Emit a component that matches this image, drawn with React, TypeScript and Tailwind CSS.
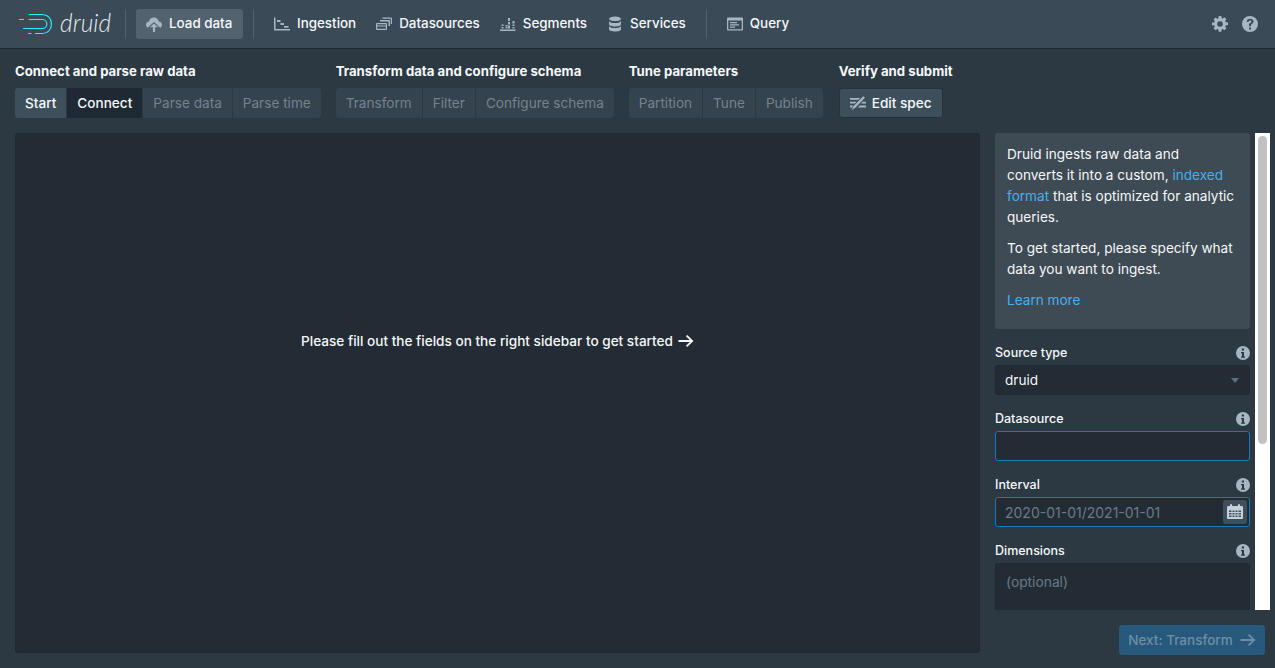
import type { ReactNode } from 'react'

// blueprint style icons, drawn by hand on a 16 grid
const Icon = ({ children, size = 16, className = '' }: { children: ReactNode; size?: number; className?: string }) => (
    <svg width={size} height={size} viewBox="0 0 16 16" fill="currentColor" className={'shrink-0 ' + className}>
        {children}
    </svg>
)

const CloudUpload = () => (
    <Icon>
        <path d="M8 1.500c2.500 0 4.500 1.700 4.800 4 1.700.2 3.200 1.500 3.200 3.300 0 1.300-.7 2.400-1.800 3L8 6 1.800 11.800C.7 11.200 0 10.100 0 8.800c0-1.800 1.300-3.100 3-3.300C3.500 3.100 5.500 1.500 8 1.500z" />
        <path d="M8 7.500l4 3.800H9.100V16H6.900v-4.700H4z" />
    </Icon>
)

const Gantt = () => (
    <Icon>
        <path d="M0 1.500h1.500v11.500H16v1.500H0z" />
        <path d="M3 4h3.500v2H3zM6.500 7H10v2H6.500zM10 10h4.500v1.800H10z" />
    </Icon>
)

const MultiSelect = () => (
    <Icon>
        <path fillRule="evenodd" d="M1 7h9a1 1 0 011 1v5a1 1 0 01-1 1H1a1 1 0 01-1-1V8a1 1 0 011-1zm.2 1.200v1.300h8.600V8.200zm0 2.300v2.300h8.600v-2.300z" />
        <path d="M4 4h9a1 1 0 011 1v5h-1.500V5.500H4z" />
        <path d="M6.500 1.500H15a1 1 0 011 1V8h-1.200V2.700H6.500z" />
    </Icon>
)

const Stacked = () => (
    <Icon>
        <path d="M0 13.500h16V15H0zM2 8.500h2V10H2zM2 11h2v1.500H2zM6 9h2v1.500H6zM6 11h2v1.500H6zM8.500 2h2v3h-2zM8.500 6h2v2.500h-2zM8.500 9.500h2v3h-2zM13 5h2v2.500h-2zM13 8.500h2V10h-2zM13 11h2v1.500h-2z" transform="translate(-0.500 0)" />
    </Icon>
)

const Database = () => (
    <Icon>
        <ellipse cx="8" cy="2.800" rx="6" ry="2.300" />
        <path d="M2 5.200c1 1.300 3.400 1.900 6 1.900s5-.6 6-1.900v3c0 1.300-2.700 2.300-6 2.300s-6-1-6-2.300z" />
        <path d="M2 10.200c1 1.300 3.400 1.900 6 1.900s5-.6 6-1.900v3c0 1.300-2.700 2.300-6 2.300s-6-1-6-2.300z" />
    </Icon>
)

const Application = () => (
    <Icon>
        <path fillRule="evenodd" d="M1 1.500h14a1 1 0 011 1v11a1 1 0 01-1 1H1a1 1 0 01-1-1v-11a1 1 0 011-1zM1.300 4.500v8.700h13.400V4.500z" />
        <path d="M3 6h7v1.200H3zM3 8.300h9v1.200H3zM3 10.600h5v1.200H3z" />
    </Icon>
)

const ManualData = () => (
    <Icon>
        <path d="M0 3h10L8.500 4.800H0zM0 6.800h6.500L5 8.600H0zM0 10.600h3l-1 1.800H0zM9.500 10.600H16v1.800H8zM12.500 6.800H16v1.800h-5z" />
        <path d="M13.200 1.200l1.800 1.600L5 13l-3.500 2 1.700-3.500z" />
    </Icon>
)

const Cog = () => (
    <Icon>
        <path fillRule="evenodd" d="M6.700 0h2.600l.4 2.100 1 .4L12.500 1.300l1.900 1.900-1.200 1.800.4 1 2.400.400v2.700l-2.400.4-.4 1 1.200 1.800-1.900 1.900-1.800-1.200-1 .4-.4 2.400H6.700l-.4-2.400-1-.4-1.800 1.200-1.900-1.900 1.200-1.800-.4-1L0 9.300V6.700l2.400-.4.4-1-1.200-1.800 1.900-1.900 1.800 1.200 1-.4zM8 5.200a2.800 2.800 0 100 5.600 2.800 2.800 0 000-5.600z" />
    </Icon>
)

const Help = () => (
    <Icon>
        <path fillRule="evenodd" d="M8 0a8 8 0 110 16A8 8 0 018 0zM7 11.500V13.500h2v-2zM8 2.800c-1.900 0-3.200 1-3.400 2.900l1.900.3c.1-.9.600-1.400 1.500-1.400.8 0 1.300.4 1.300 1.100 0 .6-.4 1-1 1.400C7.500 7.200 7 7.900 7 9v1.200h2V9.300c0-.5.200-.8.800-1.200.9-.6 1.700-1.300 1.700-2.600 0-1.700-1.400-2.700-3.500-2.700z" />
    </Icon>
)

const Info = () => (
    <svg width={14} height={14} viewBox="0 0 14 14" fill="currentColor" className="shrink-0 text-[#a7b6c2]">
        <path fillRule="evenodd" d="M7 0a7 7 0 110 14A7 7 0 017 0zM5.800 2.500v2h2.200v-2zM5 6v1.200h1v3.300H5v1.200h4v-1.200H8V6z" />
    </svg>
)

const Calendar = () => (
    <Icon>
        <path fillRule="evenodd" d="M1 2h2V1a1 1 0 012 0v1h6V1a1 1 0 012 0v1h2a1 1 0 011 1v11a1 1 0 01-1 1H1a1 1 0 01-1-1V3a1 1 0 011-1zm1 4.500V8h2.500V6.500zm3.500 0V8h2V6.500zm3 0V8h2V6.500zm3 0V8H14V6.500zM2 9v1.500h2.500V9zm3.500 0v1.500h2V9zm3 0v1.500h2V9zm3 0v1.500H14V9zM2 11.500V13h2.500v-1.500zm3.500 0V13h2v-1.500zm3 0V13h2v-1.500zm3 0V13H14v-1.500z" />
    </Icon>
)

const ArrowRight = ({ className = '' }: { className?: string }) => (
    <Icon className={className}>
        <path d="M9.200 2L15.500 8l-6.300 6-1.300-1.300L11.800 9H.5V7h11.300L7.900 3.300z" />
    </Icon>
)

const Logo = () => (
    <svg width={36} height={26} viewBox="0 0 36 26" fill="none" stroke="#2ceefb" strokeWidth={1.200} strokeLinecap="round" className="shrink-0">
        <path d="M11 3.500h13.500c5 0 9 4 9 9.500s-4 9.500-9 9.500h-7" />
        <path d="M11 8.500h13.500c2.500 0 4.300 2 4.300 4.500s-1.800 4.500-4.300 4.500H5.500" />
        <path d="M1.500 8.500h4M10.500 22.500h2.500" />
    </svg>
)

const Divider = () => <div className="w-px h-[30px] bg-[#50606d] mx-[10px]" />

const NavLink = ({ icon, label, className = '' }: { icon: ReactNode; label: string; className?: string }) => (
    <div className={'flex items-center gap-[7px] h-[30px] px-[10px] rounded-[3px] ' + className}>
        <span className="text-[#a7b6c2]">{icon}</span>
        <span className="text-[13.400px] font-medium text-[#f5f8fa] pb-[2px]">{label}</span>
    </div>
)

const StepGroup = ({ title, steps, className = '' }: { title: string; steps: { label: string; state?: string }[]; className?: string }) => (
    <div className={className}>
        <div className="text-[13.200px] font-bold leading-[15px] text-[#f5f8fa] mb-[9px]">{title}</div>
        <div className="flex">
            {steps.map((step, index) => (
                <div
                    key={index}
                    className={
                        'h-[30px] px-[10px] flex items-center text-[13.600px] border-r border-[#2c3842] last:border-r-0 first:rounded-l-[3px] last:rounded-r-[3px] '
                        + (step.state === 'active'
                            ? 'bg-[#1f2933] text-[#f5f8fa] font-medium'
                            : step.state === 'done'
                                ? 'bg-[#3e4f5c] text-[#f5f8fa] font-medium'
                                : 'bg-[#35434f] text-[#74828e]')
                    }
                >
                    {step.label}
                </div>
            ))}
        </div>
    </div>
)

const Field = ({ label, children }: { label: string; children: ReactNode }) => (
    <div className="mb-[15px]">
        <div className="flex items-center justify-between h-[18px] mb-[3px]">
            <span className="text-[12.500px] font-medium text-[#f5f8fa]">{label}</span>
            <Info />
        </div>
        {children}
    </div>
)

export default function App() {
    return (
        <div className="w-[1275px] h-[668px] overflow-hidden flex flex-col bg-[#2c3842] text-[#f5f8fa] font-['Inter','Liberation_Sans',sans-serif]">
            <nav className="h-[49px] shrink-0 flex items-center bg-[#3a4a57] border-b border-[#1f2933] pl-[18px] pr-[17px]">
                <Logo />
                <span className="ml-[6px] w-[55px] text-[24.500px] font-light italic leading-none text-[#e4e8ec] pb-[2px] font-['Lato','Noto_Sans',sans-serif]">druid</span>
                <Divider />
                <NavLink icon={<CloudUpload />} label="Load data" className="bg-[#52626f] w-[107px]" />
                <Divider />
                <NavLink icon={<Gantt />} label="Ingestion" />
                <NavLink icon={<MultiSelect />} label="Datasources" />
                <NavLink icon={<Stacked />} label="Segments" />
                <NavLink icon={<Database />} label="Services" />
                <Divider />
                <NavLink icon={<Application />} label="Query" />
                <div className="ml-auto flex items-center gap-[14px] text-[#a7b6c2]">
                    <Cog />
                    <Help />
                </div>
            </nav>

            <main className="flex-1 min-h-0 flex flex-col pl-[15px] pr-[5px] pt-[15px]">
                <div className="flex gap-[15px] h-[69px] shrink-0">
                    <StepGroup
                        title="Connect and parse raw data"
                        steps={[{ label: 'Start', state: 'done' }, { label: 'Connect', state: 'active' }, { label: 'Parse data' }, { label: 'Parse time' }]}
                    />
                    <StepGroup
                        title="Transform data and configure schema"
                        steps={[{ label: 'Transform' }, { label: 'Filter' }, { label: 'Configure schema' }]}
                    />
                    <StepGroup title="Tune parameters" steps={[{ label: 'Partition' }, { label: 'Tune' }, { label: 'Publish' }]} />
                    <div className="ml-[1px]">
                        <div className="text-[13.200px] font-bold leading-[15px] text-[#f5f8fa] mb-[9px]">Verify and submit</div>
                        <div className="h-[30px] w-[104px] pl-[10px] flex items-center gap-[6px] rounded-[3px] bg-[#3e4f5c] border border-[#27323b] text-[13.600px] font-medium">
                            <span className="text-[#a7b6c2]"><ManualData /></span>
                            Edit spec
                        </div>
                    </div>
                </div>

                <div className="flex-1 min-h-0 flex gap-[15px]">
                    <div className="w-[965px] h-[520px] shrink-0 rounded-[3px] bg-[#232c35] border border-[#1f2933] flex items-center justify-center gap-[5px] pb-[104px] text-[13.600px] font-medium">
                        Please fill out the fields on the right sidebar to get started
                        <ArrowRight />
                    </div>

                    <div className="w-[275px] flex flex-col">
                        <div className="h-[477px] flex overflow-hidden">
                            <div className="w-[255px] shrink-0">
                                <div className="h-[196px] rounded-[3px] bg-[#3e4a54] pt-[11px] px-[12px] text-[13.600px] leading-[21px] mb-[15px]">
                                    <p className="mb-[10px]">
                                        Druid ingests raw data and converts it into a custom, <span className="text-[#48aff0]">indexed</span> <span className="text-[#48aff0]">format</span> that is optimized for analytic queries.
                                    </p>
                                    <p className="mb-[10px]">To get started, please specify what data you want to ingest.</p>
                                    <p className="text-[#48aff0]">Learn more</p>
                                </div>
                                <Field label="Source type">
                                    <div className="h-[30px] pl-[9px] pr-[10px] flex items-center justify-between rounded-[3px] bg-[#232c35] border border-[#1f2933] text-[13.600px]">
                                        druid
                                        <span className="w-0 h-0 border-x-[4px] border-x-transparent border-t-[5px] border-t-[#5c7080]" />
                                    </div>
                                </Field>
                                <Field label="Datasource">
                                    <div className="h-[30px] rounded-[3px] bg-[#232c35] border border-[#137cbd]" />
                                </Field>
                                <Field label="Interval">
                                    <div className="h-[30px] pl-[9px] pr-[2px] flex items-center justify-between rounded-[3px] bg-[#232c35] border border-[#137cbd] text-[14px] text-[#6b7a86]">
                                        2020-01-01/2021-01-01
                                        <span className="w-[24px] h-[24px] flex items-center justify-center rounded-[3px] bg-[#3e4f5c] text-[#c5d0d9]"><Calendar /></span>
                                    </div>
                                </Field>
                                <Field label="Dimensions">
                                    <div className="h-[60px] pl-[10px] pt-[8px] rounded-[3px] bg-[#232c35] border border-[#1f2933] text-[13.800px] text-[#6b7a86]">(optional)</div>
                                </Field>
                            </div>
                            <div className="ml-[5px] w-[15px] shrink-0 bg-white pt-[3px] px-[3px]">
                                <div className="h-[308px] rounded-full bg-[#c1c1c1]" />
                            </div>
                        </div>
                        <div className="flex justify-end pt-[15px] pr-[5px]">
                            <div className="h-[30px] w-[146px] flex items-center justify-center gap-[7px] rounded-[3px] bg-[#27597d] text-[13.500px] font-medium text-[#6f8ea5]">
                                Next: Transform
                                <ArrowRight />
                            </div>
                        </div>
                    </div>
                </div>
            </main>
        </div>
    )
}
